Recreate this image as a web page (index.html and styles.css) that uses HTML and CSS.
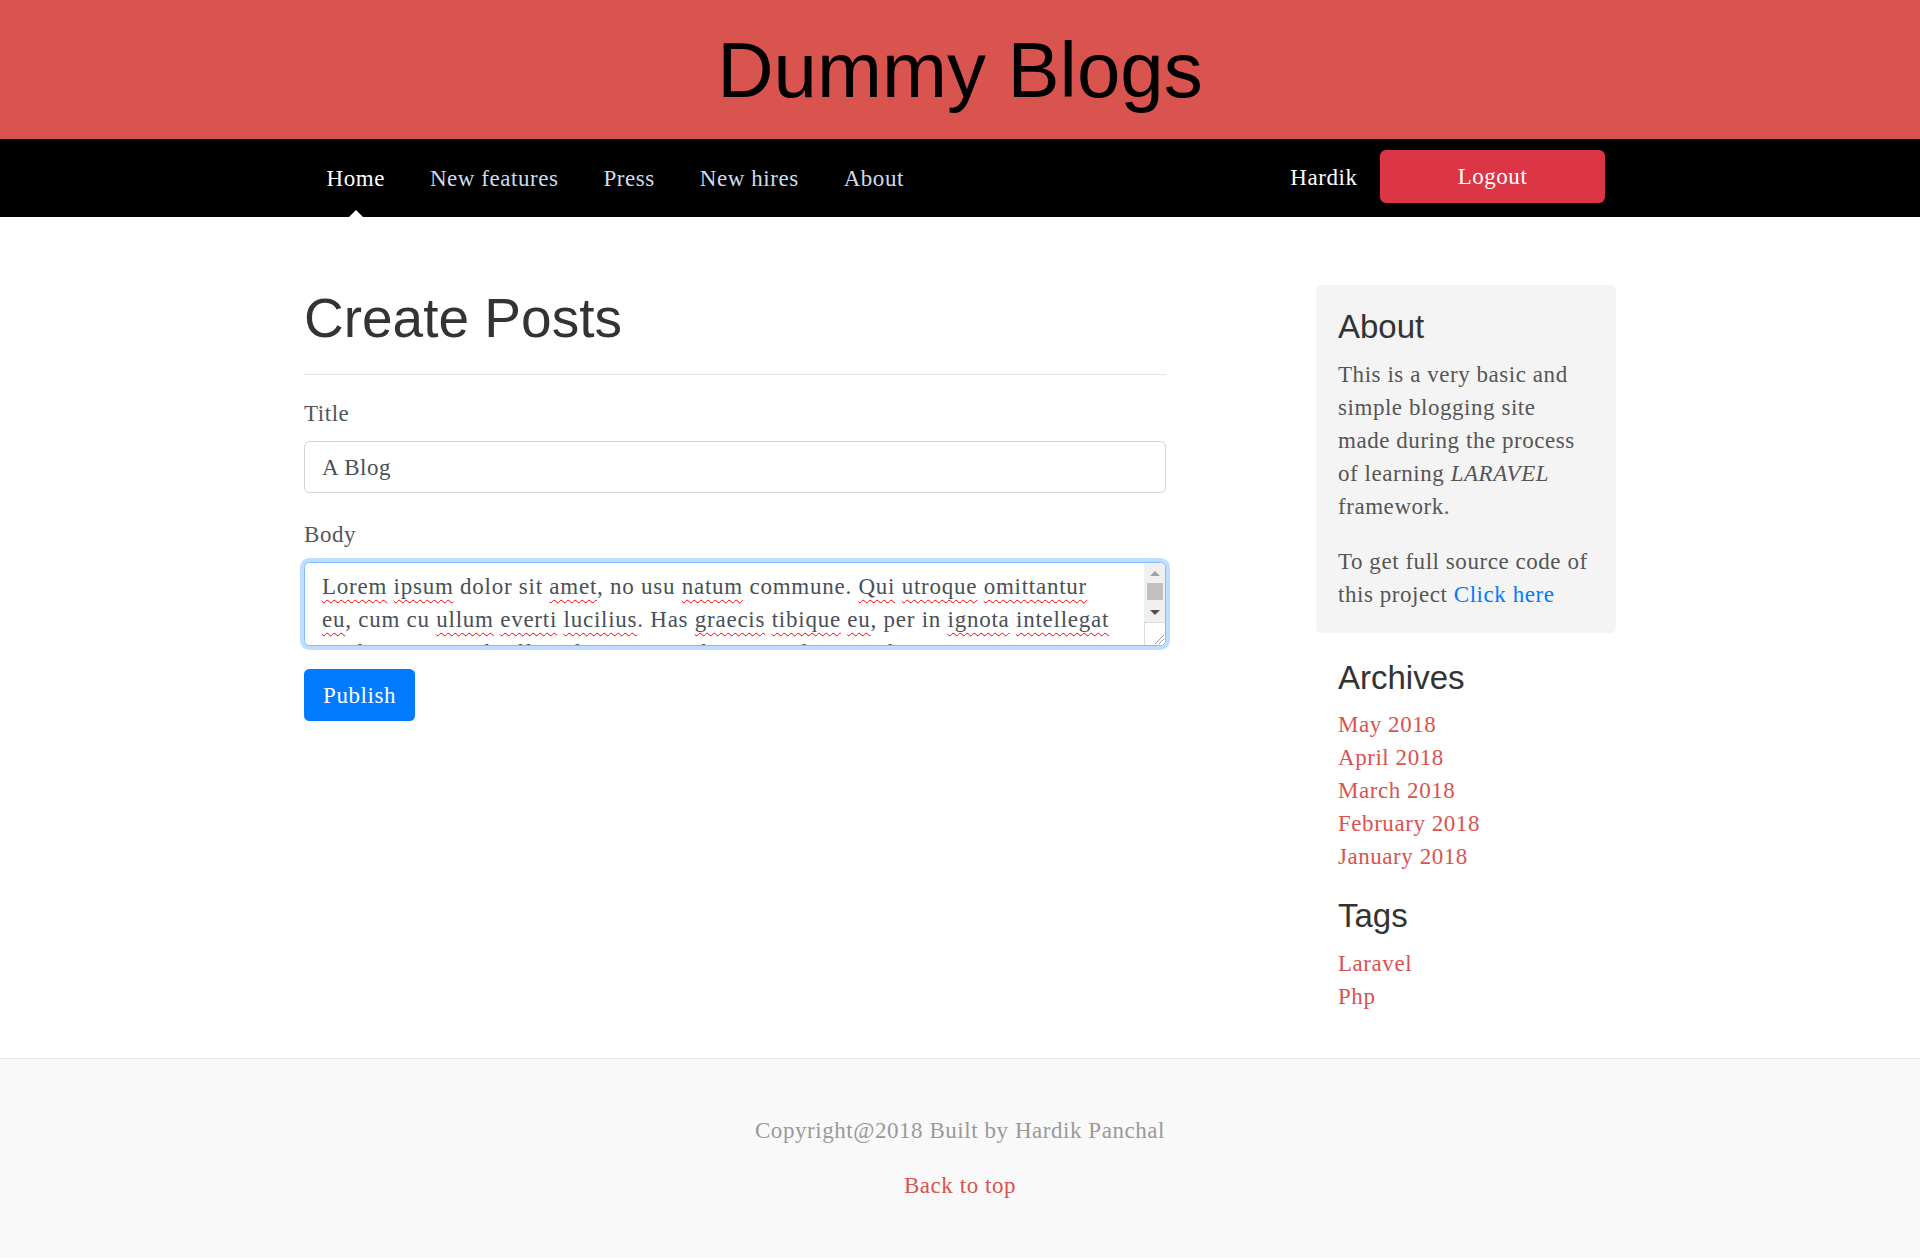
FILE: index.html
```html
<!DOCTYPE html>
<html lang="en">
<head>
<meta charset="utf-8">
<title>Dummy Blogs</title>
<link rel="stylesheet" href="styles.css">
</head>
<body>
<header class="masthead">
  <h1 class="brand">Dummy Blogs</h1>
</header>
<nav class="topnav">
  <div class="container nav-inner">
    <div class="nav-left">
      <a class="nav-link active" href="#">Home</a>
      <a class="nav-link" href="#">New features</a>
      <a class="nav-link" href="#">Press</a>
      <a class="nav-link" href="#">New hires</a>
      <a class="nav-link" href="#">About</a>
    </div>
    <div class="nav-right">
      <a class="nav-user" href="#">Hardik</a>
      <a class="btn-logout" href="#">Logout</a>
    </div>
  </div>
</nav>

<div class="container main-row">
  <main class="blog-main">
    <h1 class="page-title">Create Posts</h1>
    <hr class="divider">
    <form class="post-form">
      <div class="form-group">
        <label class="form-label">Title</label>
        <div class="form-input">A Blog</div>
      </div>
      <div class="form-group">
        <label class="form-label">Body</label>
        <div class="form-textarea">
          <div class="textarea-text"><span class="sp">Lorem</span> <span class="sp">ipsum</span> dolor sit <span class="sp">amet</span>, no usu <span class="sp">natum</span> commune. <span class="sp">Qui</span> <span class="sp">utroque</span> <span class="sp">omittantur</span><br><span class="sp">eu</span>, cum cu <span class="sp">ullum</span> <span class="sp">everti</span> <span class="sp">lucilius</span>. Has <span class="sp">graecis</span> <span class="sp">tibique</span> <span class="sp">eu</span>, per in <span class="sp">ignota</span> <span class="sp">intellegat</span><br><span class="sp">mediocritatem</span> id, <span class="sp">affert</span> <span class="sp">alterum</span> <span class="sp">erroribus</span> ex mel, ne sit <span class="sp">dicam</span> <span class="sp">veniam</span> <span class="sp">sanctus</span>.</div>
          <div class="fake-scroll">
            <div class="sb-btn sb-up"><span class="tri-up"></span></div>
            <div class="sb-thumb"></div>
            <div class="sb-btn sb-down"><span class="tri-down"></span></div>
            <div class="sb-corner">
              <svg width="12" height="12" viewBox="0 0 12 12"><path d="M11 2 L2 11 M11 6 L6 11" stroke="#9a9a9a" stroke-width="1" fill="none"/></svg>
            </div>
          </div>
        </div>
      </div>
      <button class="btn-publish" type="button">Publish</button>
    </form>
  </main>

  <aside class="blog-sidebar">
    <div class="module module-inset">
      <h4 class="module-title">About</h4>
      <p class="module-text">This is a very basic and simple blogging site made during the process of learning <em>LARAVEL</em> framework.</p>
      <p class="module-text last">To get full source code of this project <a class="blue-link" href="#">Click here</a></p>
    </div>
    <div class="module module-archives">
      <h4 class="module-title">Archives</h4>
      <ol class="link-list">
        <li><a href="#">May 2018</a></li>
        <li><a href="#">April 2018</a></li>
        <li><a href="#">March 2018</a></li>
        <li><a href="#">February 2018</a></li>
        <li><a href="#">January 2018</a></li>
      </ol>
    </div>
    <div class="module module-tags">
      <h4 class="module-title">Tags</h4>
      <ol class="link-list">
        <li><a href="#">Laravel</a></li>
        <li><a href="#">Php</a></li>
      </ol>
    </div>
  </aside>
</div>

<footer class="blog-footer">
  <p class="footer-copy">Copyright@2018 Built by Hardik Panchal</p>
  <p class="footer-top"><a href="#">Back to top</a></p>
</footer>
</body>
</html>
```

FILE: styles.css
```css
* { box-sizing: border-box; }

html, body { margin: 0; padding: 0; }

body {
  font-family: "Liberation Serif", "Times New Roman", serif;
  font-size: 23px;
  line-height: 33px;
  letter-spacing: 0.55px;
  color: #555;
  background: #fff;
}

a { text-decoration: none; }

.container {
  width: 1312px;
  margin: 0 auto;
}

/* Masthead */
.masthead {
  background: #d9534f;
  padding: 23px 0 22px;
}
.brand {
  margin: 0;
  text-align: center;
  font-family: "Liberation Sans", Arial, sans-serif;
  font-weight: 400;
  font-size: 78px;
  line-height: 94px;
  letter-spacing: 0;
  color: #000;
}

/* Nav */
.topnav {
  background: #000;
  height: 78px;
}
.nav-inner {
  display: flex;
  justify-content: space-between;
  height: 78px;
}
.nav-left {
  display: flex;
}
.nav-link {
  position: relative;
  display: block;
  padding: 23px 22.5px 22px;
  color: #cdddeb;
}
.nav-link.active { color: #fff; }
.nav-link.active::after {
  content: "";
  position: absolute;
  left: 50%;
  bottom: 0;
  margin-left: -7px;
  border-left: 7px solid transparent;
  border-right: 7px solid transparent;
  border-bottom: 7px solid #fff;
}
.nav-right {
  display: flex;
  align-items: flex-start;
  margin-right: 11px;
}
.nav-user {
  display: block;
  padding: 22px 22.5px 0;
  color: #fff;
}
.btn-logout {
  display: flex;
  align-items: center;
  justify-content: center;
  margin-top: 11px;
  width: 225px;
  height: 53px;
  background: #dc3545;
  border-radius: 6px;
  color: #fff;
}

/* Main row */
.main-row {
  display: grid;
  grid-template-columns: 862px 300px;
  column-gap: 150px;
  align-items: start;
  margin-top: 68px;
}

.page-title {
  margin: 0;
  font-family: "Liberation Sans", Arial, sans-serif;
  font-weight: 400;
  font-size: 55px;
  line-height: 66px;
  letter-spacing: 0;
  color: #333;
}
.divider {
  margin: 23px 0 22px;
  border: 0;
  border-top: 1px solid #e6e6e6;
  height: 0;
}
.post-form { margin: 0; }
.form-group { margin-bottom: 25px; }
.form-group + .form-group { margin-bottom: 23px; }
.form-label {
  display: block;
  margin-bottom: 11px;
  color: #555;
}
.form-input {
  height: 52px;
  padding: 9px 17px;
  border: 1px solid #ced4da;
  border-radius: 5.5px;
  color: #495057;
  background: #fff;
}
.form-textarea {
  position: relative;
  height: 84px;
  border: 1px solid #80bdff;
  border-radius: 5.5px;
  box-shadow: 0 0 0 4px rgba(0, 123, 255, 0.25);
  background: #fff;
  overflow: hidden;
}
.textarea-text {
  padding: 7px 22px 0 17px;
  color: #495057;
  letter-spacing: 0.75px;
  white-space: nowrap;
}
.sp {
  text-decoration: underline wavy #f00;
  text-decoration-thickness: 1px;
  text-underline-offset: 5px;
}
.fake-scroll {
  position: absolute;
  top: 0;
  right: 0;
  bottom: 0;
  width: 21px;
  background: #f0f0f0;
  display: flex;
  flex-direction: column;
}
.sb-btn {
  height: 20px;
  display: flex;
  align-items: center;
  justify-content: center;
}
.tri-up {
  width: 0; height: 0;
  border-left: 5px solid transparent;
  border-right: 5px solid transparent;
  border-bottom: 5px solid #a3a3a3;
}
.tri-down {
  width: 0; height: 0;
  border-left: 5px solid transparent;
  border-right: 5px solid transparent;
  border-top: 5px solid #505050;
}
.sb-thumb {
  height: 17px;
  margin: 0 2px 2px 3px;
  background: #c1c1c1;
}
.sb-corner {
  flex: 1;
  background: #fff;
  border-left: 1px solid #dcdcdc;
  border-top: 1px solid #dcdcdc;
  display: flex;
  align-items: flex-end;
  justify-content: flex-end;
}
.sb-corner svg { display: block; }

.btn-publish {
  display: block;
  width: 111px;
  height: 52px;
  padding: 0;
  border: 0;
  border-radius: 5.5px;
  background: #007bff;
  color: #fff;
  font-family: "Liberation Serif", "Times New Roman", serif;
  font-size: 23px;
  letter-spacing: 0.55px;
  line-height: 33px;
}

/* Sidebar */
.module { padding: 0 22px; }
.module-inset {
  padding: 22px;
  background: #f4f4f4;
  border-radius: 5.5px;
}
.module-archives { margin-top: 25px; }
.module-tags { margin-top: 23px; }
.module-title {
  margin: 0 0 11px;
  font-family: "Liberation Sans", Arial, sans-serif;
  font-weight: 400;
  font-size: 33px;
  line-height: 39.6px;
  letter-spacing: 0;
  color: #333;
}
.module-text {
  margin: 0 0 22px;
  width: 254px;
}
.module-text.last { margin-bottom: 0; }
.blue-link { color: #007bff; }
.link-list {
  list-style: none;
  margin: 0;
  padding: 0;
}
.link-list a { color: #d9534f; }

/* Footer */
.blog-footer {
  margin-top: 45px;
  padding: 55px 0;
  border-top: 1px solid #e5e5e5;
  background: #f9f9f9;
  text-align: center;
  color: #999;
}
.blog-footer p { margin: 0 0 22px; }
.blog-footer p:last-child { margin-bottom: 0; }
.blog-footer a { color: #d9534f; }
```
